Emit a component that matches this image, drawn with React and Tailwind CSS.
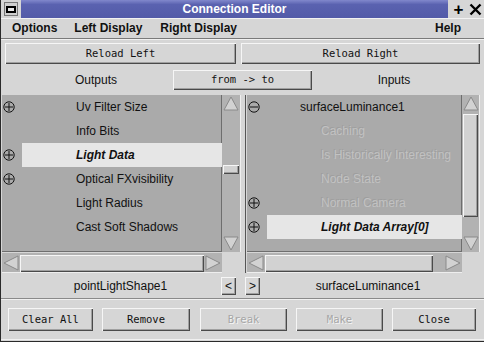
import React from "react";

const bevel = "shadow-[inset_1px_1px_0_#f6f6f6,inset_-1px_-1px_0_#4a4a4a,inset_-2px_-2px_0_#a0a0a0]";

function CircleIcon({ minus }) {
    return (
        <svg width="12" height="12" viewBox="0 0 12 12">
            <circle cx="6" cy="6" r="5.2" fill="none" stroke="#111" strokeWidth="1" />
            <line x1="2" y1="6" x2="10" y2="6" stroke="#111" strokeWidth="1" />
            {!minus && <line x1="6" y1="2" x2="6" y2="10" stroke="#111" strokeWidth="1" />}
        </svg>
    );
}

function Arrow({ dir }) {
    const pts = {
        up: "9,2 16,15 2,15",
        down: "2,3 16,3 9,16",
        left: "2,9 16,2 16,16",
        right: "2,2 16,9 2,16",
    }[dir];
    return (
        <svg width="18" height="18" viewBox="0 0 18 18" className="block">
            <polygon points={pts} fill="#d2d2d2" stroke="#8a8a8a" strokeWidth="1" />
        </svg>
    );
}

function ListRow({ icon, text, indent, selected, dim, bold }) {
    return (
        <div className="flex h-[24px] items-center">
            <div className="w-[20px] flex items-center pl-[1px]">{icon}</div>
            <div
                className={
                    "flex-1 h-full flex items-center whitespace-nowrap overflow-hidden " +
                    (selected ? "bg-[#e6e6e6]" : "")
                }
                style={{ paddingLeft: indent }}
            >
                <span
                    className={
                        (bold ? "font-bold italic text-[#000] " : "") +
                        (dim ? "text-[#c2c2c2] [text-shadow:-1px_-1px_0_#9e9e9e]" : "text-[#111]")
                    }
                >
                    {text}
                </span>
            </div>
        </div>
    );
}

function Btn({ children, className, disabled }) {
    return (
        <div
            className={
                "flex items-center justify-center bg-[#d6d6d6] font-['DejaVu_Sans_Mono',monospace] text-[10.5px] " +
                bevel +
                " " +
                (disabled ? "text-[#a6a6a6] [text-shadow:1px_1px_0_#f4f4f4] " : "text-[#111] ") +
                className
            }
        >
            {children}
        </div>
    );
}

export default function App() {
    return (
        <div className="w-[484px] h-[342px] bg-[#d6d6d6] flex flex-col font-['Liberation_Sans',Arial,sans-serif] text-[12px] border-l border-b border-[#2a2a2a] overflow-hidden">
            {/* title bar */}
            <div className="h-[18px] flex items-stretch bg-[#d6d6d6]">
                <div className="w-[20px] flex items-center justify-center">
                    <div className="w-[14px] h-[14px] bg-[#cfcfcf] flex items-center justify-center border border-[#777]">
                        <div className="w-[10px] h-[7px] border-2 border-black bg-[#e8e8e8]" />
                    </div>
                </div>
                <div className="flex-1 bg-[linear-gradient(#8188cc,#5a62b0_25%,#535ba8)] text-white font-bold text-[12px] flex items-center justify-center mr-[2px]">
                    Connection Editor
                </div>
                <div className="w-[17px] flex items-center justify-center font-bold text-[17px] leading-none text-black">+</div>
                <div className="w-[17px] flex items-center justify-center">
                    <svg width="13" height="13" viewBox="0 0 13 13">
                        <path d="M1.5 1.5 L11.5 11.5 M11.5 1.5 L1.5 11.5" stroke="#000" strokeWidth="2.4" />
                    </svg>
                </div>
            </div>

            {/* menu */}
            <div className="h-[20px] flex items-center font-bold text-[12px] text-[#111] shadow-[inset_0_1px_0_#f2f2f2]">
                <span className="ml-[11px]">Options</span>
                <span className="ml-[17px]">Left Display</span>
                <span className="ml-[18px]">Right Display</span>
                <span className="ml-auto mr-[23px]">Help</span>
            </div>
            <div className="h-[1px] bg-[#7a7a7a]" />
            <div className="h-[1px] bg-[#f0f0f0]" />

            {/* reload row */}
            <div className="flex mt-[3px] h-[21px] pl-[4px] pr-[4px] gap-[5px]">
                <Btn className="w-[231px]">Reload Left</Btn>
                <Btn className="flex-1">Reload Right</Btn>
            </div>

            {/* label row */}
            <div className="flex mt-[6px] h-[20px] items-center">
                <div className="w-[172px] text-center text-[#111] pl-[18px]">Outputs</div>
                <Btn className="w-[139px] h-[20px]">from -&gt; to</Btn>
                <div className="flex-1 text-center text-[#111] pr-[8px]">Inputs</div>
            </div>

            {/* lists */}
            <div className="flex mt-[5px] h-[178px]">
                {/* left */}
                <div className="ml-[1px] grid grid-cols-[220px_19px] grid-rows-[157px_21px]">
                    <div className="bg-[#aaaaaa] shadow-[inset_0_-1px_0_#6e6e6e,inset_-1px_0_0_#6e6e6e]">
                        <ListRow icon={<CircleIcon />} text="Uv Filter Size" indent={54} />
                        <ListRow text="Info Bits" indent={54} />
                        <ListRow icon={<CircleIcon />} text="Light Data" indent={54} selected bold />
                        <ListRow icon={<CircleIcon />} text="Optical FXvisibility" indent={54} />
                        <ListRow text="Light Radius" indent={54} />
                        <ListRow text="Cast Soft Shadows" indent={54} />
                    </div>
                    <div className="bg-[#b2b2b2] flex flex-col shadow-[inset_-1px_0_0_#eeeeee]">
                        <Arrow dir="up" />
                        <div className="flex-1 relative">
                            <div className={"absolute left-[1px] right-[2px] top-[52px] h-[9px] bg-[#d2d2d2] " + bevel} />
                        </div>
                        <Arrow dir="down" />
                    </div>
                    <div className="bg-[#b2b2b2] flex items-center mt-[1px] shadow-[inset_0_-1px_0_#eeeeee]">
                        <Arrow dir="left" />
                        <div className={"flex-1 h-[17px] bg-[#d2d2d2] " + bevel} />
                        <Arrow dir="right" />
                    </div>
                    <div />
                </div>

                {/* right */}
                <div className="ml-[4px] w-[1px] bg-[#555]" />
                <div className="ml-[1px] grid grid-cols-[215px_18px] grid-rows-[157px_21px]">
                    <div className="bg-[#aaaaaa] shadow-[inset_0_-1px_0_#6e6e6e,inset_-1px_0_0_#6e6e6e] overflow-hidden">
                        <ListRow icon={<CircleIcon minus />} text="surfaceLuminance1" indent={33} />
                        <ListRow text="Caching" indent={54} dim />
                        <ListRow text="Is Historically Interesting" indent={54} dim />
                        <ListRow text="Node State" indent={54} dim />
                        <ListRow icon={<CircleIcon />} text="Normal Camera" indent={54} dim />
                        <ListRow icon={<CircleIcon />} text="Light Data Array[0]" indent={54} selected bold />
                    </div>
                    <div className="bg-[#b2b2b2] flex flex-col shadow-[inset_-1px_0_0_#eeeeee]">
                        <Arrow dir="up" />
                        <div className="flex-1 relative">
                            <div className={"absolute left-[1px] right-[2px] top-[1px] h-[103px] bg-[#d2d2d2] " + bevel} />
                        </div>
                        <Arrow dir="down" />
                    </div>
                    <div className="bg-[#b2b2b2] flex items-center mt-[1px] shadow-[inset_0_-1px_0_#eeeeee]">
                        <Arrow dir="left" />
                        <div className={"w-[168px] h-[17px] bg-[#d2d2d2] " + bevel} />
                        <div className="flex-1" />
                        <Arrow dir="right" />
                    </div>
                    <div />
                </div>
            </div>

            {/* names row */}
            <div className="flex mt-[3px] h-[19px] items-center text-[#111]">
                <div className="w-[219px] text-center pl-[20px]">pointLightShape1</div>
                <Btn className="w-[15px] h-[18px] ml-[1px] font-['Liberation_Sans',sans-serif] text-[12px]">&lt;</Btn>
                <Btn className="w-[15px] h-[18px] ml-[9px] font-['Liberation_Sans',sans-serif] text-[12px]">&gt;</Btn>
                <div className="flex-1 text-center pr-[8px]">surfaceLuminance1</div>
            </div>

            <div className="mt-[3px] h-[1px] bg-[#8a8a8a]" />
            <div className="h-[1px] bg-[#f0f0f0]" />

            {/* buttons */}
            <div className="flex mt-[8px] h-[23px] pl-[7px]">
                <Btn className="w-[85px]">Clear All</Btn>
                <Btn className="w-[88px] ml-[9px]">Remove</Btn>
                <Btn className="w-[87px] ml-[10px]" disabled>Break</Btn>
                <Btn className="w-[87px] ml-[9px]" disabled>Make</Btn>
                <Btn className="w-[84px] ml-[9px]">Close</Btn>
            </div>
            <div className="mt-auto h-[2px] border-t border-[#f0f0f0]" />
        </div>
    );
}
